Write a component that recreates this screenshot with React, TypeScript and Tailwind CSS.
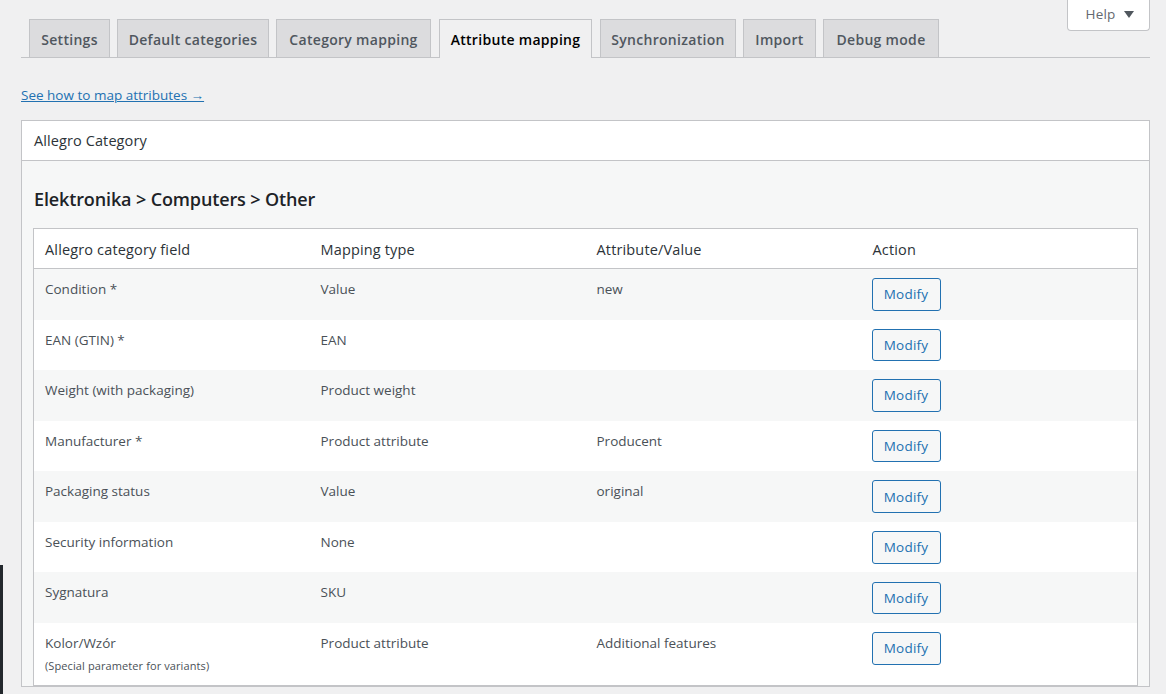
const tabs = [
  { label: 'Settings', className: 'ml-[8px] w-[81px]' },
  { label: 'Default categories', className: 'ml-[7px] w-[152px]' },
  { label: 'Category mapping', className: 'ml-[7px] w-[155px]' },
  { label: 'Attribute mapping', className: 'ml-[8px] w-[153px]' },
  { label: 'Synchronization', className: 'ml-[8px] w-[136px]' },
  { label: 'Import', className: 'ml-[7px] w-[73px]' },
  { label: 'Debug mode', className: 'ml-[7px] w-[116px]' },
];

const rows = [
  { field: 'Condition *', type: 'Value', value: 'new' },
  { field: 'EAN (GTIN) *', type: 'EAN', value: '' },
  { field: 'Weight (with packaging)', type: 'Product weight', value: '' },
  { field: 'Manufacturer *', type: 'Product attribute', value: 'Producent' },
  { field: 'Packaging status', type: 'Value', value: 'original' },
  { field: 'Security information', type: 'None', value: '' },
  { field: 'Sygnatura', type: 'SKU', value: '' },
  { field: 'Kolor/Wzór', type: 'Product attribute', value: 'Additional features', note: '(Special parameter for variants)' },
];

export default function App() {
  return (
    <div className="relative h-[694px] overflow-hidden bg-[#f0f0f1] font-['Open_Sans',sans-serif] text-[13.5px] text-[#4a5157]">
      {/* Admin menu edge */}
      <div className="absolute left-0 top-[565px] h-[129px] w-[3px] bg-[#23282d]" />

      {/* Help tab */}
      <div className="absolute right-[16px] top-0 flex h-[31px] w-[83px] items-center justify-center gap-[8px] rounded-b-[4px] border border-t-0 border-[#c3c4c7] bg-white pb-[2px] tracking-[0.2px] text-[#646970]">
        <span className="pl-[2px]">Help</span>
        <span className="h-0 w-0 border-x-[5px] border-t-[7px] border-x-transparent border-t-[#50575e]" />
      </div>

      <div className="pl-[21px] pr-[16px] pt-[19px]">
        {/* Tabs */}
        <div className="flex h-[39px] border-b border-[#c3c4c7]">
          {tabs.map((t) => (
            <div
              key={t.label}
              className={
                t.label === 'Attribute mapping'
                  ? `${t.className} flex h-[39px] items-center justify-center border border-b-0 border-[#c3c4c7] bg-[#f0f0f1] pt-[2px] text-[14px] font-semibold leading-none tracking-[0.3px] text-black`
                  : `${t.className} flex h-[38px] items-center justify-center border border-b-0 border-[#c3c4c7] bg-[#dcdcde] pt-[2px] text-[14px] font-semibold leading-none tracking-[0.3px] text-[#50575e]`
              }
            >
              {t.label}
            </div>
          ))}
        </div>

        <div className="mt-[29px] h-[17px] leading-[17px]">
          <a href="#" className="text-[#2271b1] underline">See how to map attributes →</a>
        </div>

        {/* Panel */}
        <div className="mt-[16px] border border-[#c3c4c7] bg-[#f6f7f7]">
          <div className="flex h-[40px] items-center border-b border-[#c3c4c7] bg-white px-[12px] text-[14.5px] tracking-[0.1px] text-[#2c3338]">
            Allegro Category
          </div>
          <div className="px-[11px] pt-[27px]">
            <h2 className="mb-[17px] h-[23px] pl-[1px] text-[18px] font-semibold leading-[23px] tracking-[-0.13px] text-[#1d2327]">
              Elektronika &gt; Computers &gt; Other
            </h2>
            <table className="w-full table-fixed border border-[#c3c4c7] bg-white">
              <thead>
                <tr className="h-[40px] border-b border-[#c3c4c7] text-left text-[14.5px] tracking-[0.15px] text-[#2c3338]">
                  <th className="px-[11px] pt-[2px] font-normal">Allegro category field</th>
                  <th className="px-[11px] pt-[2px] font-normal">Mapping type</th>
                  <th className="px-[11px] pt-[2px] font-normal">Attribute/Value</th>
                  <th className="px-[11px] pt-[2px] font-normal">Action</th>
                </tr>
              </thead>
              <tbody>
                {rows.map((r, i) => (
                  <tr key={r.field} className={i % 2 === 0 ? 'bg-[#f6f7f7]' : 'bg-white'}>
                    <td className="px-[11px] pt-[11px] align-top leading-[18px]">
                      {r.field}
                      {r.note && <div className="mt-[6px] pb-[11px] text-[11px] leading-[16px] tracking-[0.1px]">{r.note}</div>}
                    </td>
                    <td className="px-[11px] pt-[11px] align-top leading-[18px]">{r.type}</td>
                    <td className="px-[11px] pt-[11px] align-top leading-[18px]">{r.value}</td>
                    <td className="pl-[10px] pr-[11px] pt-[9.1px] pb-[8.9px] align-top">
                      <button className="block h-[32.6px] w-[69px] rounded-[3px] border border-[#2271b1] bg-[#f6f7f7] tracking-[0.2px] text-[#2271b1]">
                        Modify
                      </button>
                    </td>
                  </tr>
                ))}
              </tbody>
            </table>
          </div>
        </div>
      </div>
    </div>
  );
}
